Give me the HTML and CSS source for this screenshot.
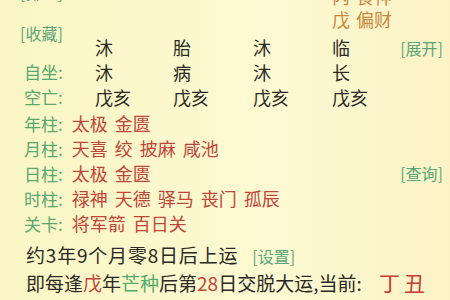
FILE: index.html
```html
<!DOCTYPE html>
<html>
<head>
  <title>命盘</title>
  <link rel="stylesheet" href="styles.css">
</head>
<body>

<div class="page">
  <!-- 四柱表 -->
  <div class="pillars">
    <div class="links">
      <a class="link">[排盘]</a>
      <a class="link save">[收藏]</a>
    </div>
    <div class="head"></div>
    <div class="head"></div>
    <div class="head"></div>
    <div class="head hidden-stems">
      <div>丙 食神</div>
      <div>戊 偏财</div>
    </div>
    <div class="head"></div>

    <div class="cell">沐</div>
    <div class="cell">胎</div>
    <div class="cell">沐</div>
    <div class="cell">临</div>
    <div class="cell right"><a class="link">[展开]</a></div>

    <div class="label">自坐:</div>
    <div class="cell">沐</div>
    <div class="cell">病</div>
    <div class="cell">沐</div>
    <div class="cell">长</div>
    <div class="cell"></div>

    <div class="label">空亡:</div>
    <div class="cell">戊亥</div>
    <div class="cell">戊亥</div>
    <div class="cell">戊亥</div>
    <div class="cell">戊亥</div>
    <div class="cell"></div>
  </div>

  <!-- 神煞 -->
  <div class="shensha">
    <div class="line"><span class="label">年柱:</span><span class="red">太极 金匮</span></div>
    <div class="line"><span class="label">月柱:</span><span class="red">天喜 绞 披麻 咸池</span></div>
    <div class="line"><span class="label">日柱:</span><span class="red">太极 金匮</span><a class="link query">[查询]</a></div>
    <div class="line"><span class="label">时柱:</span><span class="red">禄神 天德 驿马 丧门 孤辰</span></div>
    <div class="line"><span class="label">关卡:</span><span class="red">将军箭 百日关</span></div>
  </div>

  <div class="yun start">约3年9个月零8日后上运<a class="link set">[设置]</a></div>
  <div class="yun">即每逢<span class="red">戊</span>年<span class="green">芒种</span>后第<span class="red">28</span>日交脱大运,当前: <span class="current">丁丑</span></div>
</div>

</body>
</html>
```

FILE: styles.css
```css
html, body {
  margin: 0;
  padding: 0;
  height: 100%;
  overflow: hidden;
}

body {
  font-family: "Noto Sans CJK SC", "Noto Sans", sans-serif;
  background: linear-gradient(90deg, #fbf6c4 0%, #fdf9d2 60%, #fbf3c6 100%);
  color: #2b2a26;
}

.page {
  margin-top: -16px;
  padding: 0 7px 0 20px;
}

.link {
  color: #5aa57a;
  font-size: 16px;
}

.label {
  color: #55a872;
}

.red {
  color: #c2453a;
}

.green {
  color: #4fad6a;
}

/* 四柱表 */
.pillars {
  display: grid;
  grid-template-columns: 75px 78px 80px 79px 1fr auto;
  grid-template-rows: 50px 25px 25px 25px;
  font-size: 18px;
  align-items: center;
}

.links {
  grid-row: 1 / 3;
  display: flex;
  flex-direction: column;
  align-self: start;
  margin-top: -2px;
  line-height: 20px;
}

.links .save {
  margin-top: 21px;
}

.hidden-stems {
  align-self: start;
  padding-top: 1px;
  font-size: 18px;
  line-height: 23px;
  color: #c8873c;
  word-spacing: 2px;
}

.pillars .label {
  font-size: 17px;
  padding-left: 4px;
}

.cell.right {
  text-align: right;
  padding-left: 4px;
}

/* 神煞 */
.shensha {
  font-size: 18px;
  margin-top: 2px;
}

.shensha .line {
  height: 25px;
  line-height: 25px;
  padding-left: 4px;
  display: flex;
  gap: 9px;
  word-spacing: 3px;
}

.shensha .label {
  font-size: 17px;
}

.query {
  margin-left: auto;
  word-spacing: 0;
}

.yun {
  font-size: 19px;
  padding-left: 6px;
  line-height: 26px;
}

.shensha + .yun {
  margin-top: 6px;
}

.yun.start {
  letter-spacing: 0.8px;
}

.set {
  margin-left: 14px;
  letter-spacing: 0;
}

.current {
  color: #c83b32;
  font-size: 21px;
  margin-left: 13px;
  letter-spacing: 4px;
}
```
